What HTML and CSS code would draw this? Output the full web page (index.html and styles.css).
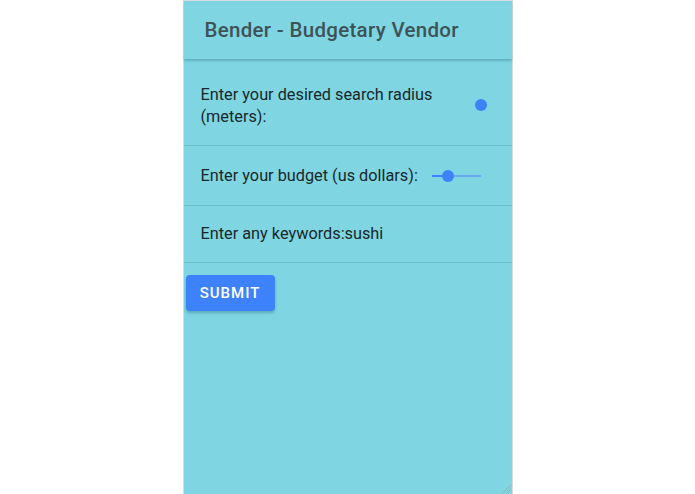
FILE: index.html
```html
<!DOCTYPE html>
<html lang="en">

<head>
    <meta charset="UTF-8">
    <meta name="viewport" content="width=device-width, initial-scale=1.0">
    <title>Bender - Budgetary Vendor</title>
    <link rel="stylesheet" href="styles.css">
</head>

<body>
    <div class="panel">
        <div class="header">
            <h1>Bender - Budgetary Vendor</h1>
        </div>
        <div class="item itemTall">
            <p class="label">Enter your desired search radius (meters):</p>
            <div class="slider sliderShort">
                <div class="thumb thumbEnd"></div>
            </div>
        </div>
        <div class="item itemMid">
            <p class="label">Enter your budget (us dollars):</p>
            <div class="slider">
                <div class="track"></div>
                <div class="fill"></div>
                <div class="thumb thumbLow"></div>
            </div>
        </div>
        <div class="item">
            <p class="label">Enter any keywords:sushi</p>
        </div>
        <button class="submit">Submit</button>
        <svg class="grip" width="12" height="12" viewBox="0 0 12 12">
            <path d="M11 3 L3 11 M11 7 L7 11" stroke="#8fb0b5" stroke-width="1" fill="none" />
        </svg>
    </div>
</body>

</html>
```

FILE: styles.css
```css
* {
    margin: 0;
    padding: 0;
    box-sizing: border-box;
}

body {
    background-color: #ffffff;
    font-family: Roboto, "Liberation Sans", sans-serif;
}

.panel {
    position: relative;
    width: 330px;
    height: 494px;
    margin: 0 auto;
    background-color: #7fd6e2;
    border: 1px solid #d8dcdd;
    border-bottom: none;
}

.header {
    display: flex;
    align-items: center;
    height: 58px;
    padding-left: 21px;
    box-shadow: 0 2px 2px rgba(40, 110, 120, 0.35);
}

.header h1 {
    font-size: 20.5px;
    font-weight: 500;
    color: #3e5356;
    letter-spacing: 0.3px;
}

.item {
    display: flex;
    align-items: center;
    height: 57px;
    padding: 0 31px 0 17px;
    border-bottom: 1px solid #6cbfca;
}

.itemTall {
    height: 86px;
    margin-top: 1px;
    padding-top: 6px;
}

.itemMid {
    height: 60px;
}

.label {
    flex: 1;
    font-size: 16.3px;
    line-height: 22px;
    color: #18282a;
}

.slider {
    position: relative;
    width: 49px;
    height: 14px;
}

.sliderShort {
    width: 30px;
}

.track,
.fill {
    position: absolute;
    top: 6px;
    left: 0;
    height: 2px;
}

.track {
    width: 49px;
    background-color: #6aa9f2;
}

.fill {
    width: 16px;
    background-color: #3d82fb;
}

.thumb {
    position: absolute;
    top: 1px;
    width: 12px;
    height: 12px;
    border-radius: 50%;
    background-color: #3d82fb;
}

.thumbEnd {
    right: -6px;
    top: 0;
}

.thumbLow {
    left: 10px;
}

.submit {
    display: block;
    margin: 12px 0 0 2px;
    width: 89px;
    height: 36px;
    border: none;
    border-radius: 4px;
    background-color: #3d82fb;
    color: #ffffff;
    font-family: Roboto, "Liberation Sans", sans-serif;
    font-size: 15px;
    font-weight: 500;
    letter-spacing: 1px;
    text-transform: uppercase;
    box-shadow: 0 2px 3px rgba(30, 80, 120, 0.35);
}

.grip {
    position: absolute;
    right: 0;
    bottom: 0;
}
```
